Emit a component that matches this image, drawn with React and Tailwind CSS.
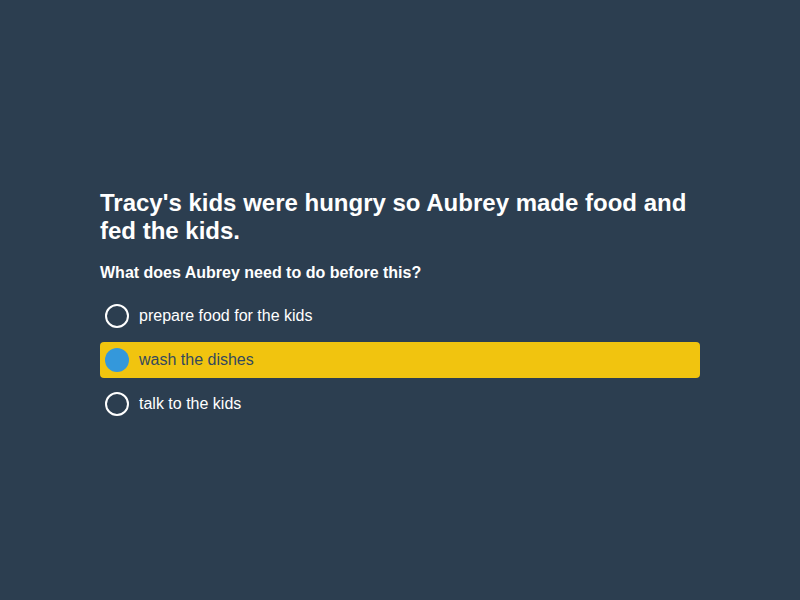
import React, { useState } from "react";

const options = [
  "prepare food for the kids",
  "wash the dishes",
  "talk to the kids",
];

const App = () => {
  const [selected, setSelected] = useState(1);

  return (
    <div
      className="flex items-center justify-center min-h-screen bg-[#2c3e50] pt-[10px]"
      style={{ fontFamily: '"Liberation Sans", Arial, sans-serif' }}
    >
      <div className="w-[600px]">
        <h1 className="text-white text-[24px] leading-[28px] font-bold">
          Tracy's kids were hungry so Aubrey made food and fed the kids.
        </h1>
        <div className="mt-[16px] text-white text-[16px] leading-[24px] font-bold">
          What does Aubrey need to do before this?
        </div>
        <div className="mt-[13px] flex flex-col gap-[8px]">
          {options.map((opt, i) => {
            const active = i === selected;
            return (
              <button
                key={opt}
                type="button"
                onClick={() => setSelected(i)}
                className={
                  active
                    ? "flex items-center gap-[10px] h-[36px] px-[5px] rounded bg-[#f1c40f] text-left"
                    : "flex items-center gap-[10px] h-[36px] px-[5px] rounded text-left"
                }
              >
                {active ? (
                  <span className="w-[24px] h-[24px] rounded-full bg-[#3498db]" />
                ) : (
                  <span className="w-[24px] h-[24px] rounded-full border-2 border-white" />
                )}
                <span
                  className={
                    active
                      ? "text-[16px] text-[#34495e]"
                      : "text-[16px] text-white"
                  }
                >
                  {opt}
                </span>
              </button>
            );
          })}
        </div>
      </div>
    </div>
  );
};

export default App;
